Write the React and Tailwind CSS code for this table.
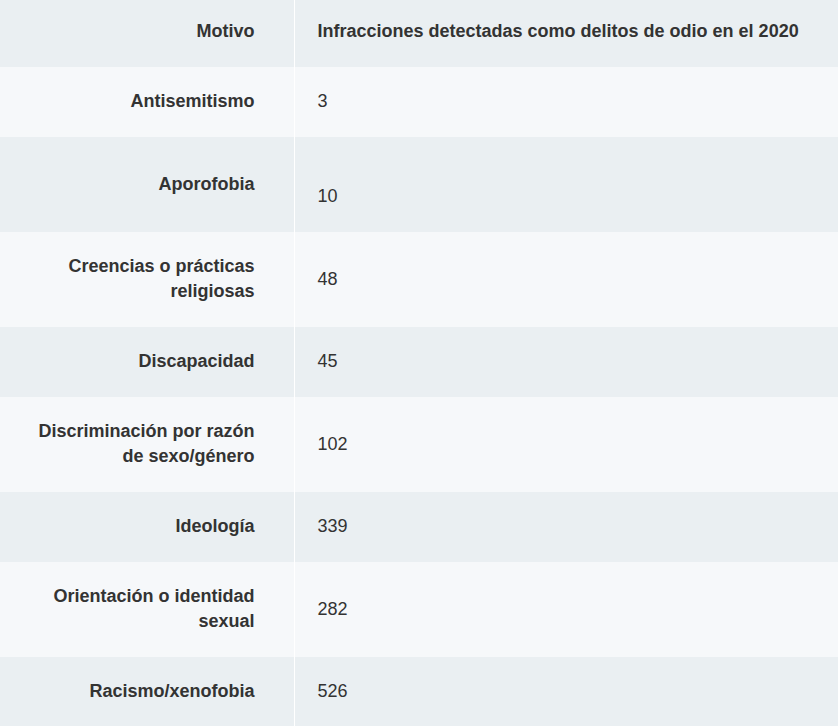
const rows = [
  { motivo: 'Antisemitismo', valor: '3' },
  { motivo: 'Aporofobia', valor: '10', extraLine: true },
  { motivo: 'Creencias o prácticas religiosas', valor: '48' },
  { motivo: 'Discapacidad', valor: '45' },
  { motivo: 'Discriminación por razón de sexo/género', valor: '102' },
  { motivo: 'Ideología', valor: '339' },
  { motivo: 'Orientación o identidad sexual', valor: '282' },
  { motivo: 'Racismo/xenofobia', valor: '526' },
]

export default function App() {
  return (
    <div className="w-[838px] h-[726px] overflow-hidden bg-white font-['Liberation_Sans',Arial,sans-serif] text-[18px] leading-[25px] text-[#333333]">
      <table className="w-full border-collapse">
        <thead>
          <tr className="bg-[#eaeff2]">
            <th className="w-[294px] border-r border-white pr-[39px] pl-4 pt-[19px] pb-[23px] text-right align-middle font-bold">
              Motivo
            </th>
            <th className="pl-[23px] pr-4 pt-[19px] pb-[23px] text-left align-middle font-bold whitespace-nowrap">
              Infracciones detectadas como delitos de odio en el 2020
            </th>
          </tr>
        </thead>
        <tbody>
          {rows.map((r, i) => (
            <tr key={r.motivo} className={i % 2 === 0 ? 'bg-[#f6f8fa]' : 'bg-[#eaeff2]'}>
              <td className="w-[294px] border-r border-white pl-8 pr-[39px] pt-[22px] pb-[23px] text-right align-middle font-bold">
                {r.motivo}
              </td>
              <td className="pl-[23px] pr-4 pt-[22px] pb-[23px] text-left align-middle">
                {r.extraLine && <br />}
                {r.valor}
              </td>
            </tr>
          ))}
        </tbody>
      </table>
    </div>
  )
}
